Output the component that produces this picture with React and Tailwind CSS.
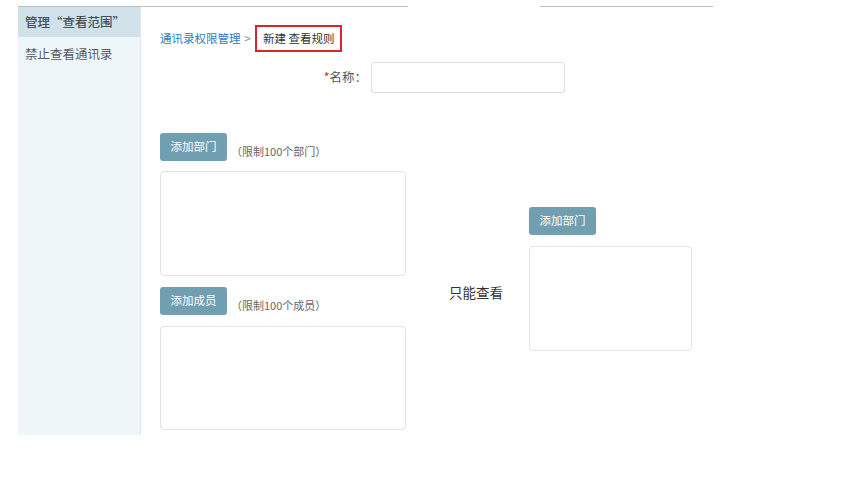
import React from 'react';

const font = { fontFamily: '"Noto Sans CJK SC", "Noto Sans", sans-serif' };

function AddButton({ label }) {
    return (
        <button type="button" className="w-[67px] h-[28px] rounded-[3px] bg-[#6f9fb0] text-white text-[11.5px] leading-none">
            {label}
        </button>
    );
}

function PickBox({ className }) {
    return <div className={`border border-[#e3e3e3] rounded-[4px] bg-white ${className}`} />;
}

export default function App() {
    return (
        <div className="w-[865px] h-[481px] bg-white pt-[6px] pl-[18px]" style={font}>
            <div className="flex h-px">
                <div className="w-[390px] h-px bg-[#b3c3cc]" />
                <div className="w-[132px]" />
                <div className="w-[173px] h-px bg-[#b3c3cc]" />
            </div>
            <div className="flex">
                {/* sidebar */}
                <div className="w-[123px] h-[428px] bg-[#eff6fa] border-r border-[#dfeaf1]">
                    <div className="h-[30px] bg-[#d0e1ea] pl-[7px] flex items-center text-[12.5px] text-[#454f55] font-medium">
                        管理“查看范围”
                    </div>
                    <div className="h-[34px] pl-[7px] flex items-center text-[12.5px] text-[#5a5a5a]">
                        禁止查看通讯录
                    </div>
                </div>

                {/* main */}
                <div className="pl-[19px] pt-[18px]">
                    <div className="flex items-center h-[27px] text-[11.5px]">
                        <span className="text-[#2b7bc4]">通讯录权限管理</span>
                        <span className="text-[#888] px-[4px]">&gt;</span>
                        <span className="h-[27px] flex items-center border-2 border-[#d9262c] px-[6px] text-[#333]">新建 查看规则</span>
                    </div>

                    <div className="flex items-center mt-[10px]">
                        <div className="w-[211px] pr-[4px] text-right text-[12.5px] text-[#555]">
                            <span className="text-[#d9262c]">*</span>名称：
                        </div>
                        <input className="w-[194px] h-[31px] border border-[#dedede] rounded-[3px] outline-none" />
                    </div>

                    <div className="flex mt-[40px]">
                        <div className="w-[246px]">
                            <div className="flex items-end">
                                <AddButton label="添加部门" />
                                <span className="ml-[4px] mb-[2px] text-[11px] text-[#666]">（限制100个部门）</span>
                            </div>
                            <PickBox className="mt-[10px] w-[246px] h-[105px]" />
                            <div className="flex items-end mt-[11px]">
                                <AddButton label="添加成员" />
                                <span className="ml-[4px] mb-[2px] text-[11px] text-[#666]">（限制100个成员）</span>
                            </div>
                            <PickBox className="mt-[11px] w-[246px] h-[104px]" />
                        </div>

                        <div className="ml-[43px] mt-[149px] text-[13.5px] text-[#333] self-start">只能查看</div>

                        <div className="ml-[26px] mt-[73px] self-start">
                            <AddButton label="添加部门" />
                            <PickBox className="mt-[11px] w-[163px] h-[105px]" />
                        </div>
                    </div>
                </div>
            </div>
        </div>
    );
}
